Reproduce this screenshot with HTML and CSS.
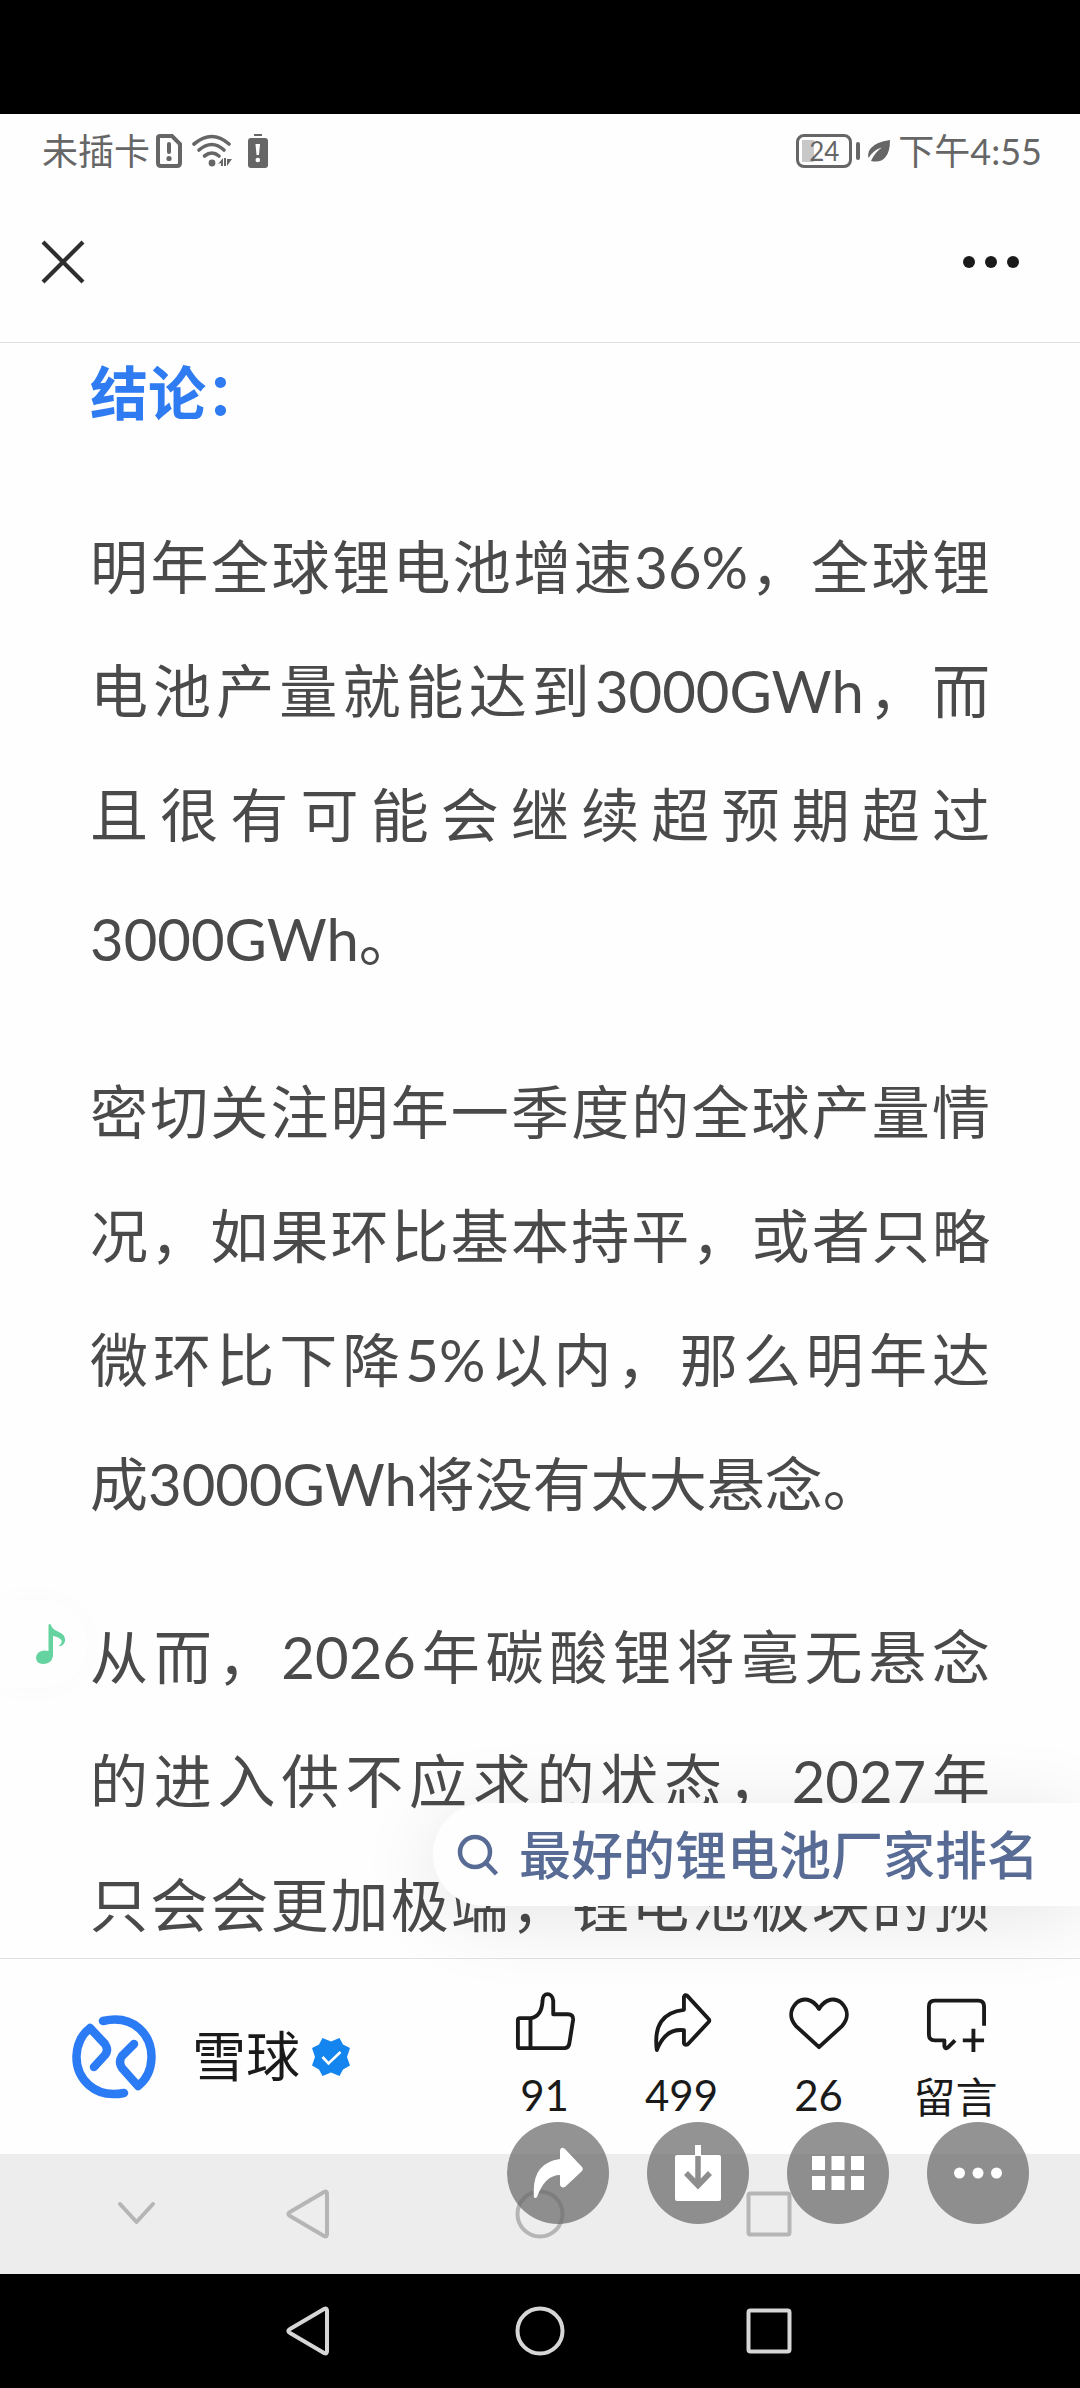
FILE: index.html
```html
<!DOCTYPE html>
<html lang="zh-Hans">
<head>
  <meta charset="UTF-8">
  <meta name="viewport" content="width=device-width, initial-scale=1.0">
  <title>雪球</title>
  <link rel="stylesheet" href="styles.css">
</head>
<body>

<svg class="sprite" aria-hidden="true">
  <symbol id="nav-back" viewBox="0 0 50 50"><path d="M38.5 2.8 4 23q-3.400 2 0 4L38.500 47.200q2.500 1 2.500-2V4.800q0-3-2.500-2z"/></symbol>
  <symbol id="nav-home" viewBox="0 0 50 50"><circle cx="25" cy="25" r="22.500"/></symbol>
  <symbol id="nav-recent" viewBox="0 0 50 50"><rect x="4.500" y="4.500" width="41" height="41" rx="2"/></symbol>
</svg>

<div class="screen">
  <header class="header">
    <div class="status">
      <span>未插卡</span>
      <svg class="i-sim" viewBox="0 0 26 34"><path d="M4 2h12l8 8v19q0 3-3 3H5q-3 0-3-3V4q0-2 2-2z" fill="none" stroke="currentColor" stroke-width="4"/><path d="M13 10v8" stroke="currentColor" stroke-width="4" stroke-linecap="round"/><circle cx="13" cy="24.500" r="2.600" fill="currentColor"/></svg>
      <svg class="i-wifi" viewBox="0 0 40 34"><g fill="none" stroke="currentColor" stroke-width="3.600" stroke-linecap="round"><path d="M2 10Q20-5 37 10"/><path d="M7 16Q20 5 32 16"/><path d="M12.500 22Q20 16 27 22"/></g><circle cx="20" cy="29" r="3.400" fill="currentColor"/><path d="M26 30l5-6v8h-2v-3zM34 24v8h-2v-8zM35 32v-7h5z" fill="currentColor"/></svg>
      <svg class="i-low" viewBox="0 0 22 34"><path d="M7 0h8v2H7z" fill="currentColor"/><rect x="1" y="4" width="20" height="30" rx="3" fill="currentColor"/><path d="M8.500 10h4.500l-1 11h-2.500z" fill="#fff"/><circle cx="10.800" cy="26" r="2.300" fill="#fff"/></svg>
      <span class="battery"><span>24</span></span>
      <svg class="i-leaf" viewBox="0 0 22 22"><path d="M22 0Q8 2 3 8q-4 4-2.500 10Q5 10 14 7.500 7 12 3 21q10 2 14.500-4Q22 12 22 0z" fill="currentColor"/></svg>
      <span>下午4:55</span>
    </div>
    <div class="title-bar">
      <button class="icon-btn" aria-label="关闭"><svg width="44" height="44" viewBox="0 0 44 44"><path d="M2 2l40 40M42 2 2 42" stroke="#2e2e2e" stroke-width="4.200"/></svg></button>
      <button class="icon-btn" aria-label="更多"><svg width="56" height="12" viewBox="0 0 56 12" fill="#1a1a1a"><circle cx="6" cy="6" r="6"/><circle cx="28" cy="6" r="6"/><circle cx="50" cy="6" r="6"/></svg></button>
    </div>
  </header>

  <main class="content">
    <article class="article">
      <h2>结论：</h2>
      <p>
        <span class="line">明年全球锂电池增速36%，全球锂</span>
        <span class="line">电池产量就能达到3000GWh，而</span>
        <span class="line">且很有可能会继续超预期超过</span>
        <span class="line last">3000GWh。</span>
      </p>
      <p>
        <span class="line">密切关注明年一季度的全球产量情</span>
        <span class="line">况，如果环比基本持平，或者只略</span>
        <span class="line">微环比下降5%以内，那么明年达</span>
        <span class="line last">成3000GWh将没有太大悬念。</span>
      </p>
      <p>
        <span class="line">从而，2026年碳酸锂将毫无悬念</span>
        <span class="line">的进入供不应求的状态，2027年</span>
        <span class="line">只会会更加极端，锂电池板块的预</span>
      </p>
    </article>

    <button class="music" aria-label="音乐"><svg width="30" height="40" viewBox="0 0 30 40"><path d="M12.500 1q1-2 2.500 0 1 4 7 6.500Q30 11 29 17q-1 5-6.500 5.500 4-3 3-6-1.500-3.500-8.500-4.500V32q-1.500 8-10 8Q0 39.500 0 33.500 1 27 8 26.500q2.500 0 4.500.5z" fill="#65d3a0"/></svg></button>

    <a class="search" href="#">
      <svg width="42" height="42" viewBox="0 0 42 42" fill="none" stroke="currentColor" stroke-width="4.500"><circle cx="18" cy="18" r="15"/><path d="M28.500 28.500 39.500 40"/></svg>
      <span>最好的锂电池厂家排名</span>
    </a>
  </main>

  <footer class="footer">
    <a class="author" href="#">
      <svg width="84" height="84" viewBox="0 0 84 84" fill="none" stroke="#2b7bf5" stroke-width="8.500" stroke-linecap="round" stroke-linejoin="round"><path d="M31 6C62-1 80 20 79.500 43 79 55 74 65 66 71L50 53q-4-6 0-12l12-12"/><path d="M52 78C22 84 4 63 4.500 41 5 29 9 20 18 13L33 29q4 6 0 11L22 52"/></svg>
      <span>雪球</span>
      <svg width="38" height="38" viewBox="0 0 38 38"><path d="M19 3.500 27.500 0l3.500 6.500 7 3.500-3 9 3 8.500-7 4-3.500 6.500L19 34.500 10.500 38 7 31.500 0 27.500 3 19 0 10l7-3.500L10.500 0z" fill="#1485ee"/><path d="M10.500 19l6 6.500L28.500 14" fill="none" stroke="#fff" stroke-width="2.600"/></svg>
    </a>
    <div class="actions">
      <button>
        <svg viewBox="0 0 62 62"><path d="M3 30q0-2 2-2h11c9-1 12-9 12.500-18 0-9 10-9 11 0v14h15q6 0 5.500 6l-4 25q-1 4-5 4H5q-2 0-2-2zM16 28v31"/></svg>
        <span>91</span>
      </button>
      <button>
        <svg viewBox="0 0 62 62"><path d="M33 19.500V6q1-3 3.500-1L58.500 29q1.500 1.500 0 3L37 55q-3 1.500-4-1V40.500Q14 38 5 61 0 23 33 19.500z"/></svg>
        <span>499</span>
      </button>
      <button>
        <svg viewBox="0 0 62 62"><path d="M31 18.500C24 7 14 7 8 12 0 20 1 29 7 36l24 22 24-22c6-7 7-16-1-24-6-5-16-5-23 6.500z"/></svg>
        <span>26</span>
      </button>
      <button>
        <svg viewBox="0 0 62 62"><path d="M60 36V16q0-6-6-6H9q-6 0-6 6v29q0 6 6 6h10v6q1 4 4 1l7-7M49 39v24M38 51h22"/></svg>
        <span class="zh">留言</span>
      </button>
    </div>
  </footer>

  <nav class="nav nav-light">
    <button class="collapse" aria-label="收起"><svg viewBox="0 0 50 50"><path d="M9 15l16.500 18L42 15"/></svg></button>
    <button aria-label="返回"><svg><use href="#nav-back"/></svg></button>
    <button aria-label="主页"><svg><use href="#nav-home"/></svg></button>
    <button aria-label="最近"><svg><use href="#nav-recent"/></svg></button>
  </nav>

  <nav class="nav nav-dark">
    <span></span>
    <button aria-label="返回"><svg><use href="#nav-back"/></svg></button>
    <button aria-label="主页"><svg><use href="#nav-home"/></svg></button>
    <button aria-label="最近"><svg><use href="#nav-recent"/></svg></button>
  </nav>

  <div class="floating">
    <button aria-label="分享"><svg width="50" height="58" viewBox="0 0 50 52"><path d="M27 12V3q1.500-4 5-1L49 20q1.500 2 0 4L32 40q-4 1.500-5-2V28Q12 28 4 50q-2 2-3 0Q-2 16 27 12z"/></svg></button>
    <button aria-label="下载"><svg width="46" height="56" viewBox="0 0 46 56"><path d="M2 10h18V0h6v10h18q2 0 2 2v42q0 2-2 2H2q-2 0-2-2V12q0-2 2-2z"/><path d="M23 11v29M11 28l12 12.500L35 28" fill="none" stroke="#8e8e8e" stroke-width="5.500"/></svg></button>
    <button aria-label="全部"><svg width="52" height="34" viewBox="0 0 52 34"><path d="M0 0h13v14H0zM19.500 0h13v14h-13zM39 0h13v14H39zM0 20h13v14H0zM19.500 20h13v14h-13zM39 20h13v14H39z"/></svg></button>
    <button aria-label="更多"><svg width="48" height="12" viewBox="0 0 48 12"><circle cx="5.500" cy="6" r="5.500"/><circle cx="24" cy="6" r="5.500"/><circle cx="42.500" cy="6" r="5.500"/></svg></button>
  </div>
</div>

</body>
</html>
```
FILE: styles.css
```css
* { margin: 0; padding: 0; box-sizing: border-box; }

body {
  background: #000;
  font-family: Lato, "Noto Sans CJK SC", sans-serif;
}

button {
  border: none;
  background: none;
  font: inherit;
  color: inherit;
  cursor: pointer;
}

a { color: inherit; text-decoration: none; }
svg { display: block; flex: none; }
.sprite { position: absolute; width: 0; height: 0; }

.screen {
  position: relative;
  display: flex;
  flex-direction: column;
  height: 100vh;
  padding-top: 114px;
  overflow: hidden;
}

/* header */
.header {
  background: #fefefe;
  border-bottom: 1px solid #e2e2e2;
  padding-bottom: 6px;
}

.status {
  display: flex;
  align-items: center;
  height: 74px;
  padding: 0 38px 0 42px;
  color: #666;
  font-size: 36px;
  line-height: 48px;
}
.i-sim { width: 26px; height: 34px; margin-left: 6px; }
.i-wifi { width: 40px; height: 34px; margin-left: 10px; }
.i-low { width: 22px; height: 34px; margin-left: 15px; }
.i-leaf { width: 22px; height: 22px; margin: 0 8px; }

.battery {
  position: relative;
  width: 56px;
  height: 34px;
  margin-left: auto;
  margin-right: 8px;
  border: 3px solid #666;
  border-radius: 8px;
  background: linear-gradient(#c8c8c8, #c8c8c8) 3px 3px / 12px 22px no-repeat;
  font-size: 26px;
  line-height: 28px;
  text-align: center;
}
.battery::after {
  content: "";
  position: absolute;
  right: -11px;
  top: 5px;
  width: 4px;
  height: 18px;
  border-radius: 2px;
  background: #666;
}

.title-bar {
  display: flex;
  justify-content: space-between;
  align-items: center;
  height: 148px;
  padding: 0 61px 0 41px;
}

/* article */
.content {
  position: relative;
  z-index: 1;
  flex: 1;
  min-height: 0;
  background: #fefefe;
}

.article {
  position: relative;
  z-index: 1;
  height: 100%;
  padding: 0 90px;
  overflow: hidden;
  color: #4a4a4a;
  font-size: 58px;
}
.article h2 {
  margin-bottom: 62px;
  color: #2f7bf2;
  font-size: 58px;
  font-weight: 700;
  line-height: 100px;
}
.article p { margin-bottom: 49px; line-height: 124px; }
.line {
  display: block;
  height: 124px;
  text-align-last: justify;
  white-space: nowrap;
}
.line.last { text-align-last: left; }

.music {
  position: absolute;
  left: 0;
  bottom: 270px;
  width: 88px;
  height: 88px;
  padding-left: 36px;
  border-radius: 0 44px 44px 0;
  background: #fefefe;
  box-shadow: 0 0 32px rgba(0, 0, 0, 0.02);
}

.search {
  position: absolute;
  z-index: 2;
  right: 0;
  bottom: 52px;
  display: flex;
  align-items: center;
  gap: 20px;
  height: 103px;
  padding: 0 41px 0 24px;
  border-radius: 52px 0 0 52px;
  background: #fefefe;
  box-shadow: 0 10px 80px rgba(0, 0, 0, 0.1);
  color: #576b95;
  font-size: 52px;
  font-weight: 500;
  line-height: 72px;
}

/* author bar */
.footer {
  display: flex;
  justify-content: space-between;
  align-items: center;
  height: 196px;
  padding: 0 56px 0 72px;
  border-top: 1px solid #e2e2e2;
  background: #fefefe;
  color: #1a1a1a;
}
.author {
  display: flex;
  align-items: center;
  font-size: 54px;
  line-height: 72px;
}
.author span { margin: 0 12px 0 36px; }

.actions {
  display: grid;
  grid-template-columns: repeat(4, 137px);
}
.actions button {
  display: flex;
  flex-direction: column;
  align-items: center;
  font-size: 42px;
  line-height: 56px;
}
.actions svg {
  width: 60px;
  height: 60px;
  margin-bottom: 16px;
  overflow: visible;
  fill: none;
  stroke: #1a1a1a;
  stroke-width: 4;
  stroke-linejoin: round;
}
.zh { font-family: "Noto Sans CJK TC", sans-serif; }

/* system navigation */
.nav {
  display: grid;
  grid-template-columns: 1fr repeat(3, 229px) 1fr;
  align-items: center;
}
.nav button { display: flex; justify-content: center; }
.nav svg {
  width: 50px;
  height: 50px;
  fill: none;
  stroke: currentColor;
  stroke-width: 4;
  stroke-linejoin: round;
  stroke-linecap: round;
}
.nav .collapse { justify-content: flex-end; padding-right: 36px; }
.nav-light { height: 120px; background: #ededed; color: #b5b5b5; }
.nav-dark { height: 114px; background: #000; color: #d6d6d6; }

.floating {
  position: absolute;
  z-index: 3;
  right: 51px;
  bottom: 164px;
  display: flex;
  gap: 38px;
}
.floating button {
  display: flex;
  align-items: center;
  justify-content: center;
  width: 102px;
  height: 102px;
  border-radius: 50%;
  background: rgba(105, 105, 105, 0.72);
  fill: #fff;
}
```
